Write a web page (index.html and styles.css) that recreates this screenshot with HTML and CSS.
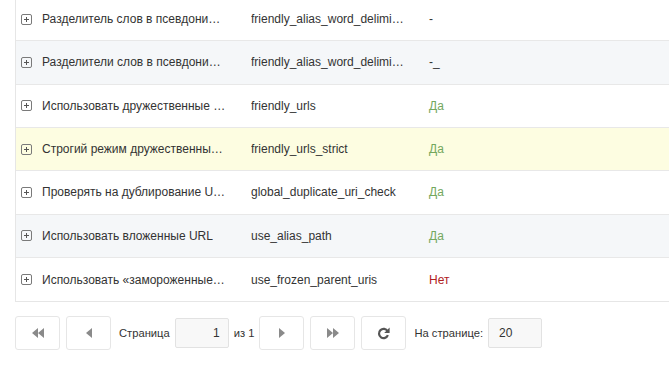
FILE: index.html
```html
<!DOCTYPE html>
<html lang="ru">
<head>
<meta charset="utf-8">
<link rel="stylesheet" href="styles.css">
</head>
<body>
<div class="page">
  <div class="grid">
    <div class="row">
      <div class="c1"><span class="plus"></span><span class="txt">Разделитель слов в псевдонимах</span></div>
      <div class="c2"><span class="txt">friendly_alias_word_delimiter</span></div>
      <div class="c3">-</div>
    </div>
    <div class="row alt">
      <div class="c1"><span class="plus"></span><span class="txt">Разделители слов в псевдонимах</span></div>
      <div class="c2"><span class="txt">friendly_alias_word_delimiters</span></div>
      <div class="c3">-_</div>
    </div>
    <div class="row">
      <div class="c1"><span class="plus"></span><span class="txt">Использовать дружественные URL</span></div>
      <div class="c2"><span class="txt">friendly_urls</span></div>
      <div class="c3 yes">Да</div>
    </div>
    <div class="row hover">
      <div class="c1"><span class="plus"></span><span class="txt">Строгий режим дружественных URL</span></div>
      <div class="c2"><span class="txt">friendly_urls_strict</span></div>
      <div class="c3 yes">Да</div>
    </div>
    <div class="row">
      <div class="c1"><span class="plus"></span><span class="txt">Проверять на дублирование URI во всех контекстах</span></div>
      <div class="c2"><span class="txt">global_duplicate_uri_check</span></div>
      <div class="c3 yes">Да</div>
    </div>
    <div class="row alt">
      <div class="c1"><span class="plus"></span><span class="txt">Использовать вложенные URL</span></div>
      <div class="c2"><span class="txt">use_alias_path</span></div>
      <div class="c3 yes">Да</div>
    </div>
    <div class="row">
      <div class="c1"><span class="plus"></span><span class="txt">Использовать «замороженные» URI родителей</span></div>
      <div class="c2"><span class="txt">use_frozen_parent_uris</span></div>
      <div class="c3 no">Нет</div>
    </div>
  </div>

  <div class="pager">
    <button class="btn" aria-label="Первая">
      <svg width="12" height="10" viewBox="0 0 12 10"><path d="M6 0 L0 5 L6 10Z M12 0 L6 5 L12 10Z" fill="#8a8a8a"/></svg>
    </button>
    <button class="btn" aria-label="Назад">
      <svg width="6" height="10" viewBox="0 0 6 10"><path d="M6 0 L0 5 L6 10Z" fill="#8a8a8a"/></svg>
    </button>
    <span class="lbl first">Страница</span>
    <span class="inp num">1</span>
    <span class="lbl">из 1</span>
    <button class="btn" aria-label="Вперёд">
      <svg width="6" height="10" viewBox="0 0 6 10"><path d="M0 0 L6 5 L0 10Z" fill="#8a8a8a"/></svg>
    </button>
    <button class="btn" aria-label="Последняя">
      <svg width="12" height="10" viewBox="0 0 12 10"><path d="M0 0 L6 5 L0 10Z M6 0 L12 5 L6 10Z" fill="#8a8a8a"/></svg>
    </button>
    <button class="btn" aria-label="Обновить">
      <svg width="13" height="13" viewBox="0 0 13 13"><path d="M10.6 4.2 A4.6 4.6 0 1 0 10.9 8.2" fill="none" stroke="#555" stroke-width="2.2"/><path d="M12.6 0.6 L12.6 6 L7.2 6Z" fill="#555"/></svg>
    </button>
    <span class="lbl first">На странице:</span>
    <span class="inp size">20</span>
  </div>
</div>
</body>
</html>
```

FILE: styles.css
```css
* { box-sizing: border-box; }
html, body { margin: 0; padding: 0; background: #fff; }
body {
  font-family: "Liberation Sans", Arial, sans-serif;
  font-size: 12px;
  color: #333;
  overflow: hidden;
}
.page { padding-left: 15px; }
.grid {
  margin-top: -2px;
  border-left: 1px solid #e6e6e6;
  border-bottom: 1px solid #e6e6e6;
  width: 654px;
}
.row {
  display: grid;
  grid-template-columns: 227px 178px 1fr;
  height: 43.33px;
  border-bottom: 1px solid #e8e8e8;
  align-items: center;
}
.row:last-child { border-bottom: none; }
.row.alt { background: #f5f7f9; }
.row.hover { background: #fdfde1; }
.c1 {
  display: flex;
  align-items: center;
  padding-left: 5px;
  min-width: 0;
}
.c2 { padding-left: 8px; min-width: 0; }
.c3 { padding-left: 8px; }
.txt {
  display: block;
  white-space: nowrap;
  overflow: hidden;
  text-overflow: ellipsis;
  min-width: 0;
}
.c1 .txt { max-width: 184px; margin-left: 10px; }
.c2 .txt { max-width: 153px; }
.plus {
  flex: none;
  width: 11px;
  height: 11px;
  border: 1px solid #7a7a7a;
  border-radius: 2px;
  position: relative;
}
.plus::before, .plus::after {
  content: "";
  position: absolute;
  background: #555;
}
.plus::before { left: 2px; right: 2px; top: 4px; height: 1px; }
.plus::after { top: 2px; bottom: 2px; left: 4px; width: 1px; }
.yes { color: #74a85d; }
.no { color: #b0221e; }

.pager {
  display: flex;
  align-items: center;
  gap: 5px;
  margin-top: 14px;
}
.btn {
  width: 45px;
  height: 34px;
  background: #fff;
  border: 1px solid #e6e6e6;
  border-radius: 3px;
  padding: 0;
  display: flex;
  align-items: center;
  justify-content: center;
}
.btn + .btn { margin-left: 1px; }
.lbl { font-size: 11.2px; color: #333; }
.lbl.first { margin-left: 3px; }
.inp {
  height: 30px;
  width: 54px;
  background: #f8f8f8;
  border: 1px solid #e2e2e2;
  border-radius: 2px;
  display: flex;
  align-items: center;
  font-size: 12px;
  color: #333;
}
.inp.num { justify-content: flex-end; padding-right: 8px; }
.inp.size { padding-left: 10px; }
```
